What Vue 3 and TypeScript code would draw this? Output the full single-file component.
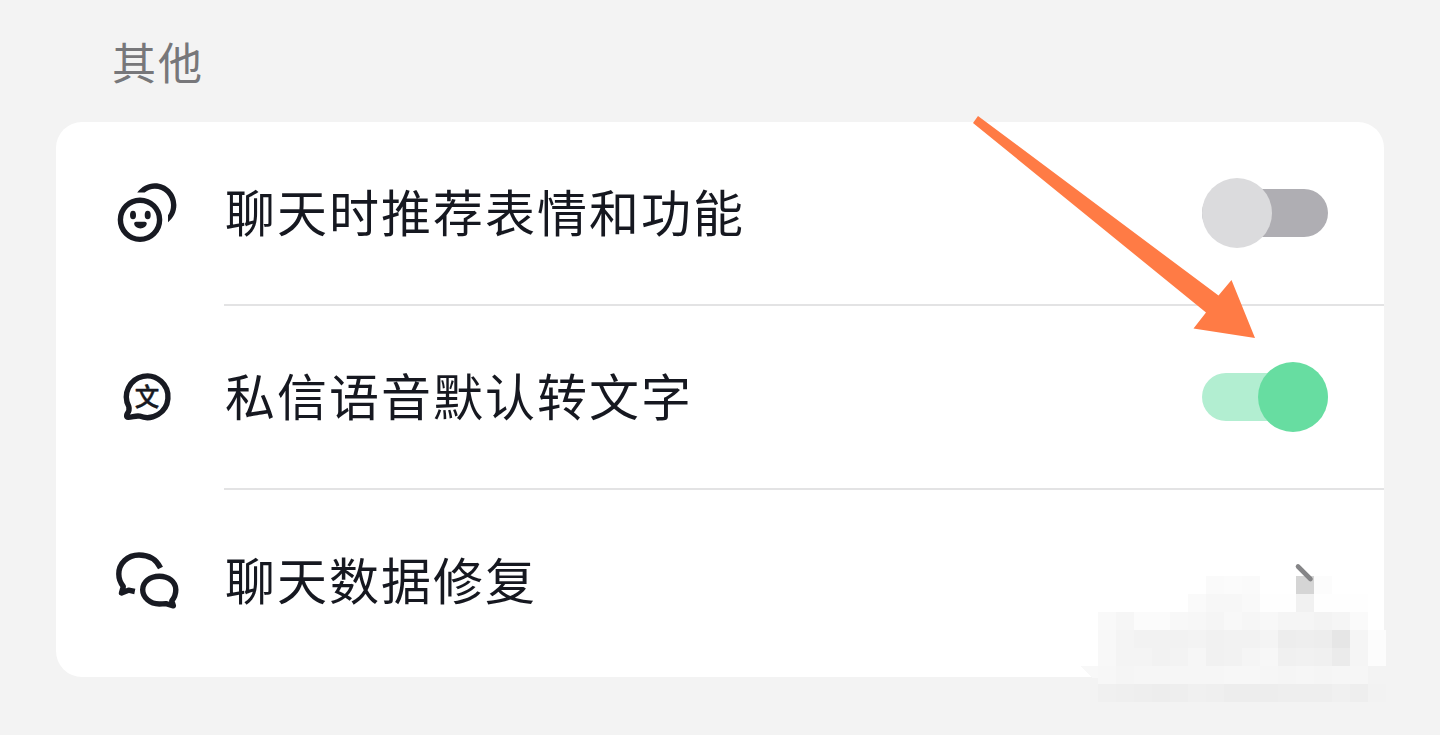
<script setup lang="ts">
import { ref } from 'vue'

interface SettingItem {
  id: string
  label: string
  type: 'switch' | 'link'
  checked?: boolean
}

const items = ref<SettingItem[]>([
  { id: 'emoji', label: '聊天时推荐表情和功能', type: 'switch', checked: false },
  { id: 'voice', label: '私信语音默认转文字', type: 'switch', checked: true },
  { id: 'repair', label: '聊天数据修复', type: 'link' },
])

// 马赛克灰度，每格 18px，'--' 表示透明
const mosaicRows: string[] = [
  '-- -- -- -- -- -- fa fb fa -- -- d5 fc -- -- --',
  '-- -- -- -- -- fa f7 f7 f9 fe fe f1 fe fe fe --',
  'f9 f6 fb fb f8 f7 f5 f8 f6 f8 f5 f5 f3 f5 fa --',
  'f8 f4 f2 f2 f2 f3 f1 f2 f2 f4 ed ee ed e6 f5 fc',
  'f8 f4 f4 f2 f3 f6 f1 f2 f5 f7 f0 f1 f0 eb f5 fc',
  'f7 f5 f6 f6 f6 f6 f6 f7 f7 f6 f5 f6 f5 f6 f6 f3',
  'f0 ef ee ed ee f0 ef ed ed ed ee ee ee f0 ee f2',
]

const mosaic = mosaicRows.flatMap((row, y) =>
  row.split(' ').map((tone, x) => ({ x: x * 18, y: y * 18, tone })),
).filter((cell) => cell.tone !== '--')

function toggle(item: SettingItem): void {
  if (item.type === 'switch') {
    item.checked = !item.checked
  }
}
</script>

<template>
  <main class="page">
    <h2 class="section-title">其他</h2>

    <section class="card">
      <div v-for="item in items" :key="item.id" class="row">
        <div class="row-icon">
          <svg v-if="item.id === 'emoji'" viewBox="0 -1 100 90" class="icon">
            <circle cx="40" cy="49.8" r="19.6" />
            <path class="solid" d="M37.2 22.6C41.5 16.8 47.8 13.3 54.8 13.3C66.8 13.3 76.4 23 76.4 35C76.4 42 73.2 48.2 68 52.2V45.2C70 42.4 71 39 71 35C71 26 63.8 18.7 54.8 18.7C51 18.7 47.5 20.1 44.7 22.6Z" />
            <ellipse class="solid" cx="33" cy="45" rx="3" ry="4.3" />
            <ellipse class="solid" cx="47.7" cy="45" rx="3" ry="4.3" />
            <path class="solid" d="M34.2 53.6Q34.2 51.8 36 51.8H44.9Q46.7 51.8 46.7 53.6C46.7 56.5 43.6 58.4 40.4 58.4S34.2 56.5 34.2 53.6Z" />
          </svg>
          <svg v-else-if="item.id === 'voice'" viewBox="0 -2 100 90" class="icon">
            <path d="M28.8 51.5A20.8 20.8 0 1 1 39.5 61.1C36 60.3 32 62.4 28.3 62.4C26.2 62.2 26.2 60.3 27.2 58.8C28.9 56.5 29.7 54.5 28.8 51.5Z" />
            <text class="glyph" x="47" y="51.2">文</text>
          </svg>
          <svg v-else viewBox="0 2 100 90" class="icon">
            <path d="M60.5 33C56.5 24.5 48.5 20 39 20C27.5 20 18.8 28.5 18.8 39C18.8 44 20.5 48 23.3 51.5L21.5 58L28.5 55.2L34.8 56.5" />
            <path d="M66 68.6L73.4 70.8L71.8 65.8C74.4 62.8 75.8 59 75.8 54.8C75.8 47.2 68.8 41.3 59.3 41.3S42.7 47.2 42.7 54.8S50 69 59.3 69C61.7 69 64 68.8 66 68.6Z" />
          </svg>
        </div>
        <div class="row-body">
          <span class="row-label">{{ item.label }}</span>
          <button
            v-if="item.type === 'switch'"
            :class="['switch', { on: item.checked }]"
            type="button"
            role="switch"
            :aria-checked="item.checked"
            @click="toggle(item)"
          >
            <span class="track"></span>
            <span class="thumb"></span>
          </button>
          <svg v-else class="chevron" viewBox="0 0 20 36">
            <path d="M4 3.5L16.5 16" />
          </svg>
        </div>
      </div>
    </section>

    <svg class="mosaic" viewBox="0 0 306 126" shape-rendering="crispEdges">
      <path d="M-18 90H0V102H-6Z" fill="#f8f8f8" />
      <rect
        v-for="cell in mosaic"
        :key="`${cell.x}-${cell.y}`"
        :x="cell.x"
        :y="cell.y"
        width="18"
        height="18"
        :fill="`#${cell.tone}${cell.tone}${cell.tone}`"
      />
    </svg>

    <svg class="arrow" viewBox="0 0 1440 735">
      <path d="M978 116L1218.5 295.5L1231.5 280L1255 338L1193.5 328.5L1206 312.5L973 123Z" />
    </svg>
  </main>
</template>

<style>
body {
  margin: 0;
  background: #f3f3f3;
}
</style>

<style scoped>
.page {
  position: relative;
  box-sizing: border-box;
  width: 1440px;
  height: 735px;
  padding: 0 56px;
  overflow: hidden;
  background: #f3f3f3;
  font-family: "Noto Sans CJK SC", sans-serif;
}

.section-title {
  height: 122px;
  margin: 0;
  padding-left: 56px;
  color: #77777a;
  font-size: 44px;
  font-weight: 400;
  line-height: 122px;
  letter-spacing: 2px;
}

.card {
  height: 555px;
  border-radius: 26px;
  background: #ffffff;
}

.row {
  display: flex;
  height: 184px;
}

.row-icon {
  display: flex;
  align-items: center;
  width: 168px;
  padding-left: 44px;
  box-sizing: border-box;
}

.icon {
  width: 100px;
  height: 90px;
  fill: none;
  stroke: #181a22;
  stroke-width: 5.4;
  stroke-linejoin: round;
}

.icon .solid {
  fill: #181a22;
  stroke: none;
}

.icon .glyph {
  fill: #181a22;
  stroke: #181a22;
  stroke-width: 0.5;
  font-size: 24.5px;
  font-weight: 500;
  text-anchor: middle;
}

.row-body {
  display: flex;
  flex: 1;
  align-items: center;
  justify-content: space-between;
  box-sizing: border-box;
  padding-right: 56px;
  border-bottom: 2px solid #e3e3e4;
}

.row:last-child .row-body {
  border-bottom-color: transparent;
}

.row-label {
  padding: 0 0 6px 1px;
  color: #161820;
  font-size: 50px;
  line-height: 72px;
  letter-spacing: 2px;
}

.switch {
  display: grid;
  align-items: center;
  width: 126px;
  height: 70px;
  padding: 0;
  border: 0;
  background: transparent;
}

.track,
.thumb {
  grid-area: 1 / 1;
}

.track {
  height: 48px;
  border-radius: 24px;
  background: #afaeb3;
}

.thumb {
  width: 70px;
  height: 70px;
  border-radius: 50%;
  background: #dbdbdd;
}

.switch.on .track {
  background: #b2eed1;
}

.switch.on .thumb {
  justify-self: end;
  background: #67dda1;
}

.chevron {
  position: relative;
  z-index: 1;
  width: 20px;
  height: 36px;
  margin-right: 14px;
  fill: none;
  stroke: #858587;
  stroke-width: 4.6;
  stroke-linecap: round;
}

.mosaic {
  position: absolute;
  top: 576px;
  left: 1098px;
  width: 306px;
  height: 126px;
  overflow: visible;
}

.arrow {
  position: absolute;
  inset: 0;
  width: 1440px;
  height: 735px;
  fill: #ff7b45;
  pointer-events: none;
}
</style>
